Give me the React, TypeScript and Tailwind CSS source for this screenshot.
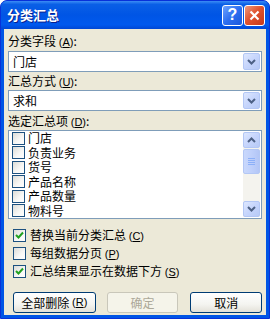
import React from "react";

const FONT = "font-['Noto_Sans_CJK_SC','Noto_Sans',sans-serif]";

function Chevron({ up = false }: { up?: boolean }) {
  return (
    <svg width="9" height="6" viewBox="0 0 9 6" className={up ? "rotate-180" : ""}>
      <polyline points="1,1 4.5,4.5 8,1" fill="none" stroke="#4D6185" strokeWidth="2" />
    </svg>
  );
}

function ArrowBtn({ up = false, cls = "" }: { up?: boolean; cls?: string }) {
  return (
    <div
      className={`flex items-center justify-center rounded-[2px] border border-[#B3C7F5] bg-[linear-gradient(135deg,#DDE7FE_0%,#C6D5FC_50%,#B7CAF6_100%)] ${cls}`}
    >
      <Chevron up={up} />
    </div>
  );
}

function Combo({ value }: { value: string }) {
  return (
    <div className="h-[21px] border border-[#7F9DB9] bg-white flex items-center pl-[4px] pr-[1px]">
      <span className="flex-1 text-[12px] leading-[14px] text-black">{value}</span>
      <ArrowBtn cls="w-[17px] h-[17px]" />
    </div>
  );
}

function Check({ checked = false }: { checked?: boolean }) {
  return (
    <div className="w-[13px] h-[13px] shrink-0 border border-[#1C5180] bg-[linear-gradient(135deg,#DCDCD7_0%,#F8F8F6_60%,#FFFFFF_100%)] flex items-center justify-center">
      {checked && (
        <svg width="9" height="9" viewBox="0 0 9 9">
          <polyline points="1,4 3.5,6.5 8,1.5" fill="none" stroke="#21A121" strokeWidth="2" />
        </svg>
      )}
    </div>
  );
}

function U({ c }: { c: string }) {
  return (
    <span className="font-['Liberation_Sans',sans-serif] text-[11px]">
      (<span className="underline underline-offset-1">{c}</span>)
    </span>
  );
}

export default function App() {
  const items = ["门店", "负责业务", "货号", "产品名称", "产品数量", "物料号"];
  return (
    <div
      className={`w-[270px] h-[319px] flex flex-col rounded-t-[7px] overflow-hidden bg-[#0055E5] border border-[#0831D9] ${FONT}`}
    >
      {/* Title bar */}
      <div className="h-[28px] shrink-0 flex items-center pl-[6px] pr-[4px] bg-[linear-gradient(to_bottom,#3C8DF5_0%,#0A5FE6_12%,#0055E5_50%,#0059EE_85%,#0047D4_100%)]">
        <span className="flex-1 text-white font-bold text-[13px] leading-[16px] [text-shadow:1px_1px_0_#0A1E8C]">
          分类汇总
        </span>
        <div className="flex gap-[1px]">
          <div className="w-[21px] h-[21px] rounded-[3px] border border-white bg-[linear-gradient(135deg,#6EA3FF_0%,#2D6FF0_50%,#1A57DC_100%)] flex items-center justify-center">
            <span className="text-white font-bold text-[16px] leading-[16px] font-['Liberation_Sans',sans-serif]">?</span>
          </div>
          <div className="w-[21px] h-[21px] rounded-[3px] border border-white bg-[linear-gradient(135deg,#EE9A7E_0%,#E0532F_45%,#C4381A_100%)] flex items-center justify-center">
            <svg width="11" height="11" viewBox="0 0 11 11">
              <path d="M1.5 1.5 L9.5 9.5 M9.5 1.5 L1.5 9.5" stroke="white" strokeWidth="2.2" />
            </svg>
          </div>
        </div>
      </div>

      {/* Body */}
      <div className="flex-1 mx-[3px] mb-[3px] bg-[#ECE9D8] pl-[4px] pr-[4px] flex flex-col text-[12px] text-black">
        <div className="mt-[5px] h-[14px] leading-[14px]">
          分类字段 <U c="A" />:
        </div>
        <div className="mt-[3px]">
          <Combo value="门店" />
        </div>
        <div className="mt-[1px] h-[16px] leading-[16px]">
          汇总方式 <U c="U" />:
        </div>
        <div className="mt-[1px]">
          <Combo value="求和" />
        </div>
        <div className="mt-[3px] h-[14px] leading-[14px]">
          选定汇总项 <U c="D" />:
        </div>
        <div className="mt-[2px] h-[89px] border border-[#7F9DB9] bg-white flex">
          <div className="flex-1 flex flex-col pl-[3px] pt-0 overflow-hidden">
            {items.map((t) => (
              <div key={t} className="h-[14.5px] shrink-0 flex items-center gap-[3px]">
                <Check />
                <span className="leading-[12px]">{t}</span>
              </div>
            ))}
          </div>
          <div className="w-[17px] my-[1px] mr-[1px] bg-[#F4F3EE] flex flex-col">
            <ArrowBtn up cls="h-[16px] w-[17px]" />
            <div className="mt-[1px] h-[25px] rounded-[2px] border border-[#B3C7F5] bg-[linear-gradient(90deg,#C9D8FC_0%,#BFD0FB_50%,#B3C6F6_100%)] flex flex-col items-center justify-center gap-[1px]">
              <div className="w-[7px] h-[1px] bg-[#8CB0F8]" />
              <div className="w-[7px] h-[1px] bg-[#8CB0F8]" />
              <div className="w-[7px] h-[1px] bg-[#8CB0F8]" />
              <div className="w-[7px] h-[1px] bg-[#8CB0F8]" />
            </div>
            <div className="flex-1" />
            <ArrowBtn cls="h-[16px] w-[17px]" />
          </div>
        </div>

        <div className="mt-[10px] flex flex-col gap-[5px] pl-[5px]">
          <div className="h-[13px] flex items-center gap-[4px]">
            <Check checked />
            <span className="leading-[14px]">替换当前分类汇总 <U c="C" /></span>
          </div>
          <div className="h-[13px] flex items-center gap-[4px]">
            <Check />
            <span className="leading-[14px]">每组数据分页 <U c="P" /></span>
          </div>
          <div className="h-[13px] flex items-center gap-[4px]">
            <Check checked />
            <span className="leading-[14px]">汇总结果显示在数据下方 <U c="S" /></span>
          </div>
        </div>

        <div className="mt-[14px] flex pl-[5px] gap-[11px]">
          <div className="w-[83px] h-[21px] rounded-[3px] border border-[#003C74] bg-[linear-gradient(to_bottom,#FFFFFF_0%,#F4F4F0_60%,#E3E1D8_100%)] flex items-center justify-center">
            全部删除&nbsp;<U c="R" />
          </div>
          <div className="w-[72px] h-[21px] rounded-[3px] border border-[#C9C7BA] bg-[#F5F4EA] flex items-center justify-center text-[#ACA899]">
            确定
          </div>
          <div className="ml-[1px] w-[72px] h-[21px] rounded-[3px] border border-[#003C74] bg-[linear-gradient(to_bottom,#FFFFFF_0%,#F4F4F0_60%,#E3E1D8_100%)] flex items-center justify-center">
            取消
          </div>
        </div>
      </div>
    </div>
  );
}
